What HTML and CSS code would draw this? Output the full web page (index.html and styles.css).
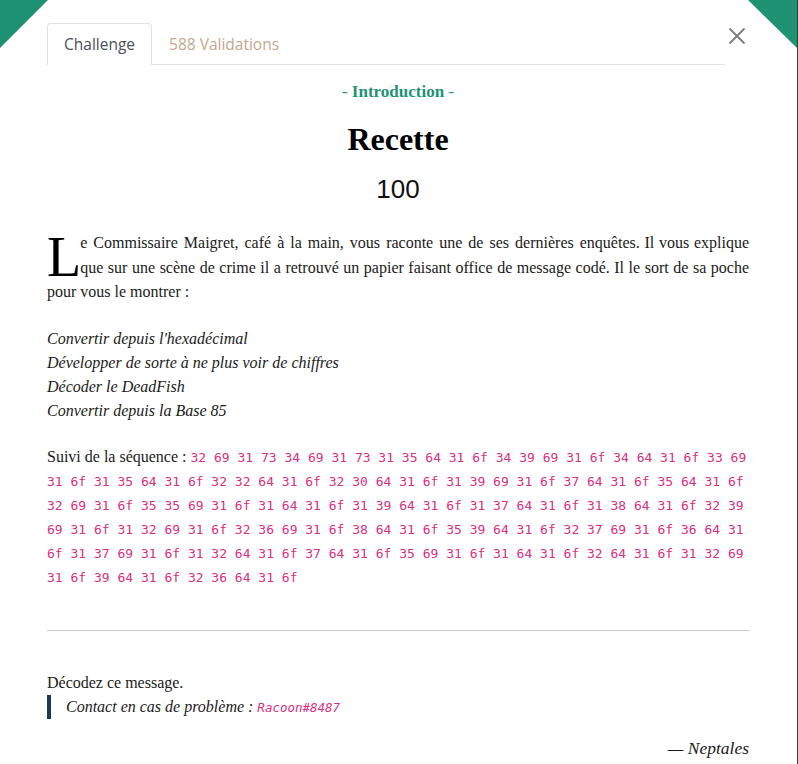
FILE: index.html
```html
<!DOCTYPE html>
<html lang="fr">
<head>
<meta charset="utf-8">
<title>Recette</title>
<link rel="stylesheet" href="styles.css">
</head>
<body>
<div class="page">
  <svg class="corner corner-left" width="48" height="48" viewBox="0 0 48 48"><polygon points="0,0 48,0 0,48" fill="#1f9274"/></svg>
  <svg class="corner corner-right" width="49" height="48" viewBox="0 0 49 48"><polygon points="0,0 49,0 49,48" fill="#1f9274"/></svg>
  <div class="header">
    <ul class="tabs">
      <li class="tab active">Challenge</li>
      <li class="tab">588 Validations</li>
    </ul>
    <button class="close" aria-label="Fermer">
      <svg width="18" height="18" viewBox="0 0 18 18"><path d="M1.5 1.5 L16.5 16.5 M16.5 1.5 L1.5 16.5" stroke="#7a7a7a" stroke-width="1.8" fill="none"/></svg>
    </button>
  </div>
  <div class="content">
    <p class="intro">- <strong>Introduction</strong> -</p>
    <h1 class="title">Recette</h1>
    <div class="points">100</div>
    <p class="lead"><span class="dropcap">L</span><span class="lead-open">e Commissaire Maigret, café à la main, vous raconte une de ses dernières enquêtes.</span> Il vous explique que sur une scène de crime il a retrouvé un papier faisant office de message codé. Il le sort de sa poche pour vous le montrer :</p>
    <p class="steps"><em>Convertir depuis l'hexadécimal</em><br><em>Développer de sorte à ne plus voir de chiffres</em><br><em>Décoder le DeadFish</em><br><em>Convertir depuis la Base 85</em></p>
    <p class="seq">Suivi de la séquence : <code>32 69 31 73 34 69 31 73 31 35 64 31 6f 34 39 69 31 6f 34 64 31 6f 33 69<br>31 6f 31 35 64 31 6f 32 32 64 31 6f 32 30 64 31 6f 31 39 69 31 6f 37 64 31 6f 35 64 31 6f<br>32 69 31 6f 35 35 69 31 6f 31 64 31 6f 31 39 64 31 6f 31 37 64 31 6f 31 38 64 31 6f 32 39<br>69 31 6f 31 32 69 31 6f 32 36 69 31 6f 38 64 31 6f 35 39 64 31 6f 32 37 69 31 6f 36 64 31<br>6f 31 37 69 31 6f 31 32 64 31 6f 37 64 31 6f 35 69 31 6f 31 64 31 6f 32 64 31 6f 31 32 69<br>31 6f 39 64 31 6f 32 36 64 31 6f</code></p>
    <hr class="rule">
    <p class="task">Décodez ce message.</p>
    <blockquote class="contact"><em>Contact en cas de problème : <code>Racoon#8487</code></em></blockquote>
    <p class="sig"><em>— Neptales</em></p>
  </div>
</div>
</body>
</html>
```

FILE: styles.css
```css
html, body {
  margin: 0;
  padding: 0;
  background: #ffffff;
}
body {
  font-family: "Liberation Serif", "Times New Roman", serif;
  font-size: 16px;
  color: #1a1a1a;
}
.page {
  position: relative;
  width: 798px;
  height: 764px;
  overflow: hidden;
  box-sizing: border-box;
  border-right: 1px solid #3b3530;
  padding: 0 48px 0 47px;
}
.corner {
  position: absolute;
  top: 0;
  display: block;
}
.corner-left { left: 0; }
.corner-right { right: 0; }

.header {
  display: flex;
  align-items: flex-start;
  padding-top: 23px;
}
.tabs {
  flex: 1;
  display: flex;
  list-style: none;
  margin: 0;
  padding: 0;
  border-bottom: 1px solid #dee2e6;
}
.tab {
  font-family: "Open Sans", "Noto Sans", sans-serif;
  font-size: 15.5px;
  line-height: 24px;
  padding: 8px 16px;
  border: 1px solid transparent;
  border-bottom: none;
  border-radius: 4px 4px 0 0;
  color: #c0aa8e;
  margin-bottom: -1px;
}
.tab.active {
  color: #495057;
  background: #fff;
  border-color: #dee2e6;
  padding-bottom: 9px;
}
.close {
  width: 24px;
  height: 24px;
  margin-top: 1px;
  padding: 0;
  border: none;
  background: none;
  display: flex;
  align-items: center;
  justify-content: center;
}

.content {
  line-height: 24px;
}
.intro {
  margin: 15px 0 0;
  text-align: center;
  color: #1f9274;
  font-size: 17px;
}
.title {
  margin: 16px 0 0;
  text-align: center;
  font-size: 32px;
  line-height: 38px;
  font-weight: bold;
  color: #000;
}
.points {
  margin-top: 16px;
  text-align: center;
  font-family: "Liberation Sans", Arial, sans-serif;
  font-size: 26px;
  line-height: 31px;
  color: #111;
}
.lead {
  margin: 26px 0 0;
  text-align: justify;
  line-height: 24.5px;
}
.lead-open {
  word-spacing: 1.3px;
}
.dropcap {
  float: left;
  font-size: 56px;
  line-height: 46px;
  padding-top: 3px;
  margin-right: -1px;
  color: #000;
}
.steps {
  margin: 22px 0 0;
}
.seq {
  margin: 22px 0 0;
}
code {
  font-family: "DejaVu Sans Mono", "Liberation Mono", monospace;
  font-size: 13px;
  line-height: 1;
  color: #d6307f;
}
.rule {
  margin: 41px 0 0;
  border: none;
  border-top: 1px solid #c8c8c8;
  height: 0;
}
.task {
  margin: 40px 0 0;
}
.contact {
  margin: 0;
  border-left: 4px solid #163a58;
  padding-left: 15px;
  color: #1a1a1a;
}
.contact code {
  font-size: 12.5px;
}
.sig {
  margin: 17px 0 0;
  text-align: right;
  font-size: 17.5px;
}
```
